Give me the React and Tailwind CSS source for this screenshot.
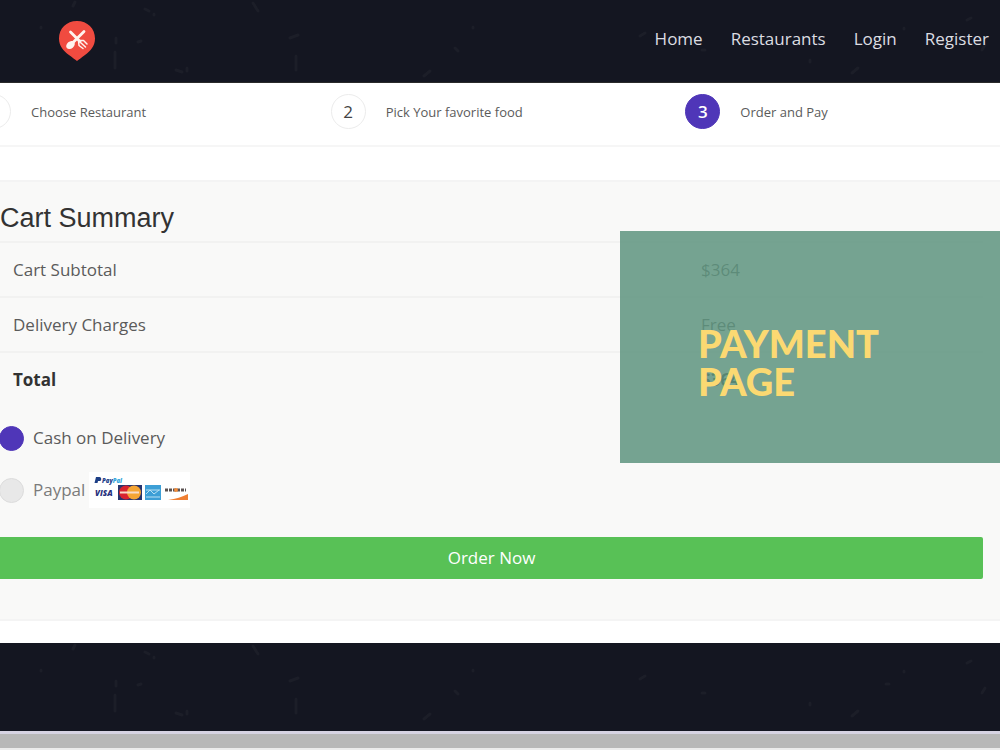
import { useState } from "react"

const navLinks = ["Home", "Restaurants", "Login", "Register"]

const steps = [
  { number: 1, label: "Choose Restaurant" },
  { number: 2, label: "Pick Your favorite food" },
  { number: 3, label: "Order and Pay", active: true },
]

const cartRows = [
  { label: "Cart Subtotal", value: "$364" },
  { label: "Delivery Charges", value: "Free" },
]

export default function App() {
  const [payment, setPayment] = useState("cod")

  return (
    <div className="min-h-screen overflow-hidden bg-white font-['Open_Sans',sans-serif] text-[17px] leading-6 text-[#5b5b5b]">
      {/* Header */}
      <header className="relative flex h-[83px] items-center justify-between border-b border-[#2a2a2a] bg-[#141621] pl-[58px] pr-[11px]">
        <Specks />
        <a href="#home" aria-label="Home page" className="relative">
          <Logo />
        </a>
        <nav className="relative flex gap-7 pb-1 text-[#dcdde2]">
          {navLinks.map((link) => (
            <a key={link} href={`#${link.toLowerCase()}`}>{link}</a>
          ))}
        </nav>
      </header>

      {/* Order steps */}
      <div className="border-b-2 border-[#f6f6f6]">
        <ol className="-ml-6 -mr-10 grid grid-cols-3 pb-4 pt-[11px]">
          {steps.map((step) => (
            <li key={step.number} className="flex items-center gap-5">
              <span
                className={`flex h-[35px] w-[35px] shrink-0 items-center justify-center rounded-full border ${step.active
                    ? "border-[#4f36b8] bg-[#4f36b8] font-semibold text-white"
                    : "border-[#ececec] bg-white text-[#444444]"
                  }`}
              >
                {step.number}
              </span>
              <span className="text-[13px]">{step.label}</span>
            </li>
          ))}
        </ol>
      </div>

      {/* Cart summary */}
      <main className="relative mt-[33px] border-y-2 border-[#f4f4f4] bg-[#f9f9f8] pb-10 pr-[17px] pt-[19px]">
        <h1 className="pb-[6px] font-['Liberation_Sans',sans-serif] text-[27px] leading-[34px] text-[#333333]">
          Cart Summary
        </h1>

        <table className="w-full text-left">
          <tbody>
            {cartRows.map((row) => (
              <tr key={row.label} className="h-[55px] border-t-2 border-[#f2f2f1]">
                <td className="w-[70%] px-[13px]">{row.label}</td>
                <td className="px-[13px]">{row.value}</td>
              </tr>
            ))}
            <tr className="h-[55px] border-t-2 border-[#f2f2f1] font-bold text-[#333333]">
              <td className="px-[13px]">Total</td>
              <td className="px-[13px]">$364</td>
            </tr>
          </tbody>
        </table>

        <form onSubmit={(e) => e.preventDefault()}>
          <div className="flex h-[62px] items-center">
            <PaymentOption value="cod" payment={payment} onChange={setPayment}>
              Cash on Delivery
            </PaymentOption>
          </div>
          <div className="flex h-[42px] items-center">
            <PaymentOption value="paypal" payment={payment} onChange={setPayment}>
              Paypal <PaypalCards />
            </PaymentOption>
          </div>
          <button type="submit" className="mt-[26px] h-[42px] w-full rounded-r-xs bg-[#58c156] text-white">
            Order Now
          </button>
        </form>

        {/* Caption over the table */}
        <div className="absolute right-0 top-[49px] flex h-[232px] w-[38%] items-center bg-[#5e947f]/85 pl-[78px] pt-[31px] pb-[1px]">
          <p className="w-[200px] font-['Lato',sans-serif] text-[38px] font-black leading-[38px] text-[#fbd972]">
            PAYMENT PAGE
          </p>
        </div>
      </main>

      {/* Footer */}
      <footer className="relative mt-[22px] h-[88px] bg-[#141621]">
        <Specks />
      </footer>
      <div className="h-[19px] border-b-2 border-t-3 border-b-[#ececec] border-t-[#d6d3e2] bg-[#b8b8b8]"></div>
    </div>
  )
}

function PaymentOption({ value, payment, onChange, children }) {
  return (
    <label className={`flex items-center gap-[9px] ${payment === value ? "" : "text-[#7b7b7b]"}`}>
      <input
        type="radio"
        name="payment"
        value={value}
        checked={payment === value}
        onChange={() => onChange(value)}
        className="-ml-px h-[25px] w-[25px] shrink-0 appearance-none rounded-full border border-[#dcdcdc] bg-[#e8e8e8] checked:border-[#4f36b8] checked:bg-[#4f36b8]"
      />
      <span className="flex items-center gap-1">{children}</span>
    </label>
  )
}

function Logo() {
  return (
    <svg width="38" height="42" viewBox="0 0 38 42">
      <path d="M19 1 C8.500 1 1 8.500 1 18.500 C1 26 5.500 31 11 35 C14.500 37.500 17 39.500 19 41 C21 39.500 23.500 37.500 27 35 C32.500 31 37 26 37 18.500 C37 8.500 29.500 1 19 1Z" fill="#f04b40" />
      <path d="M12.500 12 L22 21.500 M26 11.500 L14 23.500" stroke="#fff3ee" strokeWidth="2.800" strokeLinecap="round" />
      <ellipse cx="12.500" cy="25" rx="4.800" ry="3.500" transform="rotate(-40 12.500 25)" fill="#fff3ee" />
      <path d="M20.500 20.500 L25.500 20.500 L29 24 M20.500 20.500 L21 25.500 L25 28.500 M22.500 22.500 L27.500 27" fill="none" stroke="#fff3ee" strokeWidth="1.500" strokeLinecap="round" strokeLinejoin="round" />
    </svg>
  )
}

function PaypalCards() {
  return (
    <svg width="101" height="36" viewBox="0 0 101 36" role="img" aria-label="PayPal cards">
      <rect width="101" height="36" fill="#ffffff" />
      <path d="M7 5 H10.500 C12.500 5 13 8.500 11 9 H9 L8.500 11 H5.500Z" fill="#1d3f86" />
      <text x="13" y="11" fontFamily="Open Sans, sans-serif" fontSize="6" fontWeight="800" fontStyle="italic" fill="#24418c">
        Pay<tspan fill="#35a6dc">Pal</tspan>
      </text>
      <text x="6" y="24" fontFamily="Open Sans, sans-serif" fontSize="8" fontWeight="800" fontStyle="italic" fill="#27307d">
        VISA
      </text>
      <rect x="29" y="13" width="24" height="15" fill="#27346e" />
      <circle cx="37" cy="20.500" r="7" fill="#d8232f" />
      <circle cx="45" cy="20.500" r="7" fill="#f5a533" />
      <path d="M31 20.500 H50" stroke="#f9dcc8" strokeWidth="2" />
      <rect x="56" y="13" width="16" height="15" fill="#3d9fd6" />
      <path d="M57 18 H71 M57 22 L61 18 L65 22 L70 18 M57 25 H71" stroke="#b9e0f3" strokeWidth="1" fill="none" />
      <path d="M76 18 H97" stroke="#5a5252" strokeWidth="3" strokeDasharray="3 1" />
      <circle cx="87" cy="18" r="2" fill="#ef8b3a" />
      <path d="M79 28 C87 27 93 25 99 22 V28Z" fill="#ef7f33" />
    </svg>
  )
}

/* Faint chalk marks on the dark bars */
function Specks() {
  return (
    <svg className="absolute inset-0 h-full w-full" aria-hidden="true">
      <g fill="none" stroke="#ffffff" strokeOpacity="0.035" strokeWidth="3" strokeLinecap="round">
        <path d="M145 9 l4 2 M116 38 v5 M115 52 v16 M138 42 l3 -1 M176 70 l6 2 M187 68 v3 M75 2 l-2 4" />
        <path d="M253 3 l5 8 M290 38 l8 -3 M296 56 v14 M41 27 v1 M154 14 v1" />
        <path d="M424 76 l6 -5 M455 48 l3 3 M473 27 v1 M640 36 l5 -3 M702 50 h3" />
        <path d="M852 73 l6 -5 M904 28 v1 M886 41 h3 M967 20 l4 -2 M982 50 l3 -5 M810 60 v2" />
      </g>
    </svg>
  )
}
